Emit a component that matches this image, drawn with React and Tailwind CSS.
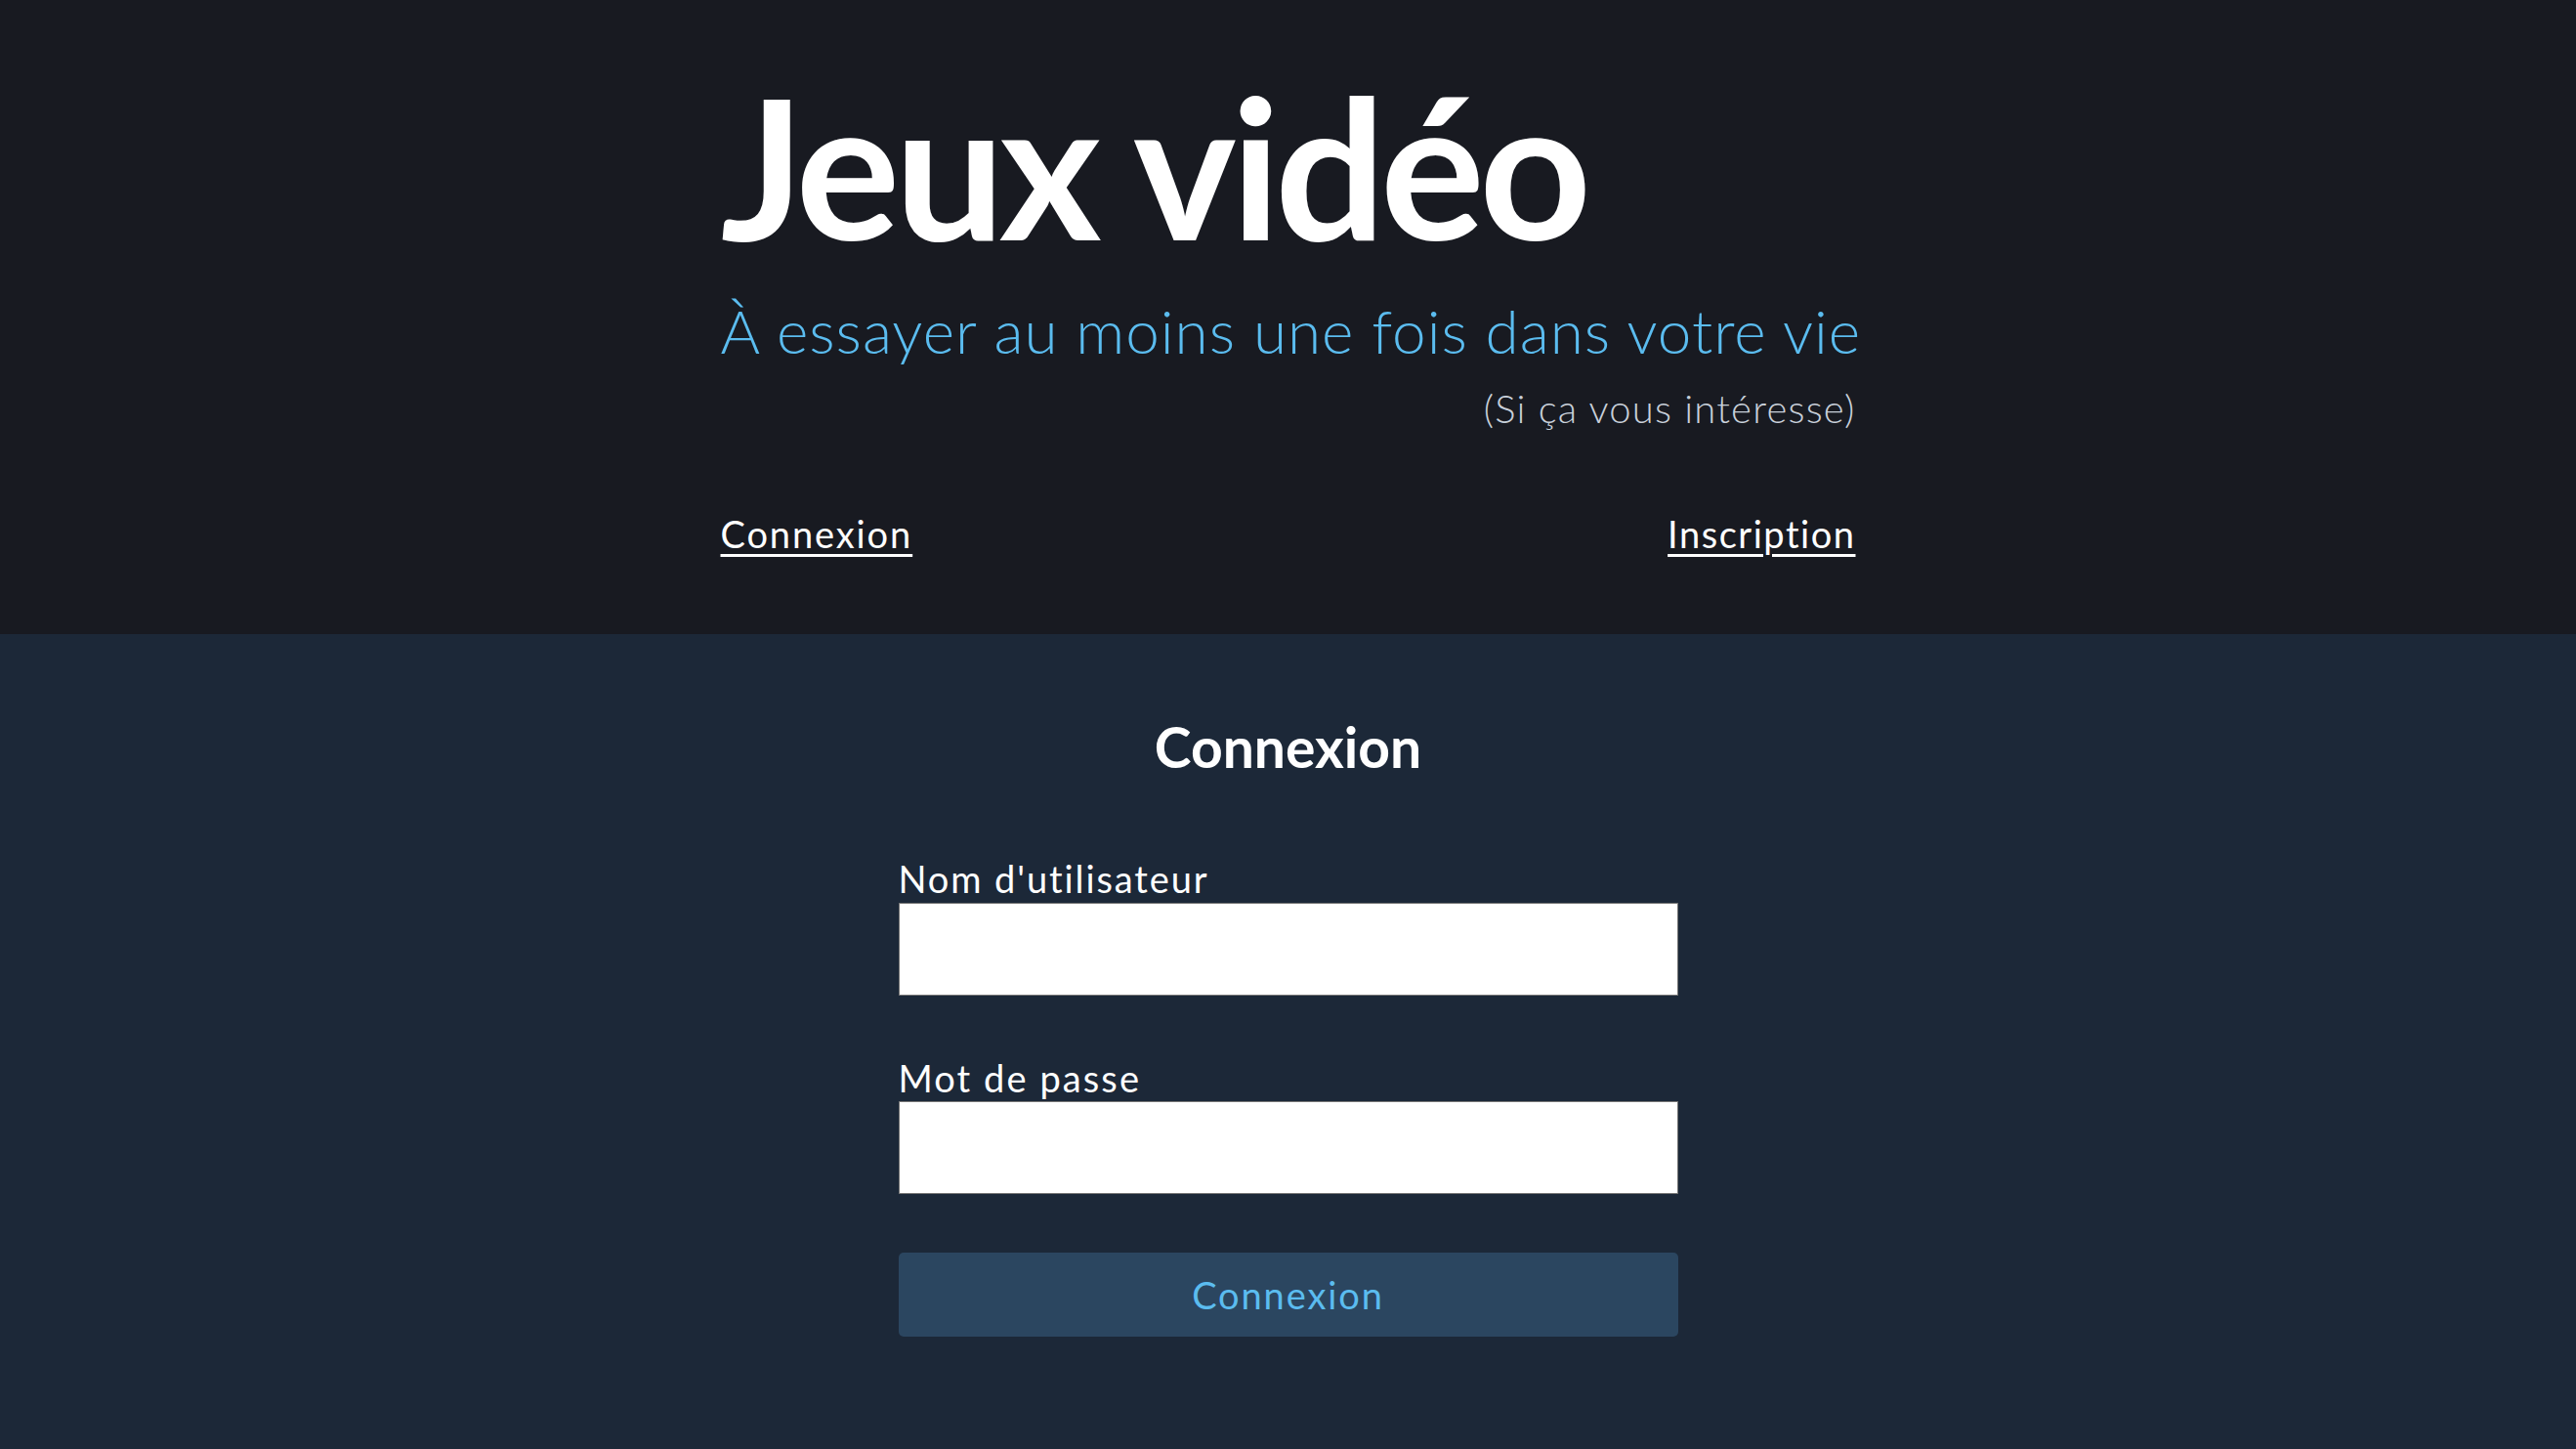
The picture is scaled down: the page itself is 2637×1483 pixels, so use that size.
import React, { useState } from "react";

export default function App() {
  const [utilisateur, setUtilisateur] = useState("");
  const [motDePasse, setMotDePasse] = useState("");

  return (
    <div className="min-h-screen bg-[#1c2838] font-['Lato',_'Noto_Sans',_sans-serif]">
      <header className="bg-[#181a21] pt-[69px] pb-[84px]">
        <div className="mx-auto w-[1162px]">
          <h1 className="text-[200px] leading-none font-bold text-white tracking-[-0.028em] whitespace-nowrap">
            Jeux vidéo
          </h1>
          <p className="mt-[38px] text-[62px] leading-none font-light tracking-[0.016em] text-[#5bbcef] whitespace-nowrap">
            À essayer au moins une fois dans votre vie
          </p>
          <p className="mt-[29px] text-right text-[40px] leading-none font-light tracking-[0.03em] text-[#c8d0da]">
            (Si ça vous intéresse)
          </p>
          <nav className="mt-[89px] flex justify-between text-[38px] leading-none tracking-[0.05em] text-white">
            <a href="#connexion" className="underline underline-offset-[6px] decoration-[3px]">
              Connexion
            </a>
            <a href="#inscription" className="underline underline-offset-[6px] decoration-[3px] tracking-[0.04em]">
              Inscription
            </a>
          </nav>
        </div>
      </header>

      <main className="pt-[87px] pb-[100px]">
        <h2 className="text-center text-[57px] leading-none font-bold text-white">Connexion</h2>
        <form className="mx-auto mt-[87px] flex w-[798px] flex-col" onSubmit={(e) => e.preventDefault()}>
          <label htmlFor="utilisateur" className="text-[38px] leading-none tracking-[0.05em] text-white">
            Nom d'utilisateur
          </label>
          <input
            id="utilisateur"
            type="text"
            value={utilisateur}
            onChange={(e) => setUtilisateur(e.target.value)}
            className="mt-[6px] h-[95px] border border-[#767676] bg-white px-3 text-[38px] text-black"
          />
          <label htmlFor="motdepasse" className="mt-[65px] text-[38px] leading-none tracking-[0.055em] text-white">
            Mot de passe
          </label>
          <input
            id="motdepasse"
            type="password"
            value={motDePasse}
            onChange={(e) => setMotDePasse(e.target.value)}
            className="mt-[5px] h-[95px] border border-[#767676] bg-white px-3 text-[38px] text-black"
          />
          <button
            type="submit"
            className="mt-[60px] h-[86px] rounded-[5px] bg-[#2b4660] text-[38px] tracking-[0.05em] text-[#5bbcef]"
          >
            Connexion
          </button>
        </form>
      </main>
    </div>
  );
}
